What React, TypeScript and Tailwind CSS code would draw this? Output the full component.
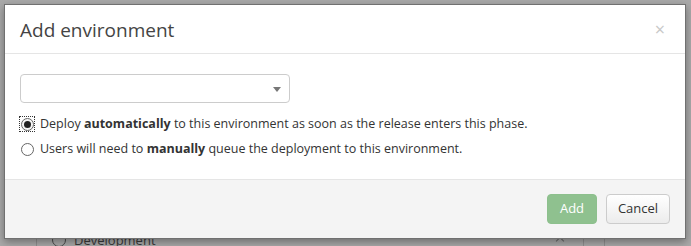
import React from "react";

export default function App() {
  const font = { fontFamily: '"Open Sans", "Noto Sans", sans-serif' };
  return (
    <div className="relative w-[691px] h-[246px] overflow-hidden bg-[#a9a9a9]" style={font}>
      {/* faint background page content */}
      <div className="absolute left-[36px] top-[236px] h-[20px] w-px bg-[#8f8f8f]" />
      <div className="absolute left-[52px] top-[232px] flex items-center gap-[8px] text-[13px] leading-[16px] text-[#3a3a3a]">
        <span className="inline-block h-[14px] w-[14px] rounded-full border border-[#4a4a4a]" />
        <span>Development</span>
      </div>
      <div className="absolute left-[557px] top-[238px] h-[6px] w-[6px] rotate-45 border-l border-t border-[#6a6a6a]" />
      <div className="absolute left-[583px] top-[236px] h-[20px] w-px bg-[#8f8f8f]" />
      <div className="absolute left-[604px] top-[236px] h-[20px] w-px bg-[#8f8f8f]" />

      {/* modal */}
      <div className="absolute left-[4px] top-[4px] flex h-[235px] w-[682px] flex-col border border-[#707070] bg-white shadow-[0_3px_8px_rgba(0,0,0,0.35)]">
        <div className="flex h-[49px] shrink-0 items-center justify-between border-b border-[#e5e5e5] pl-[15px] pr-[20px]">
          <span className="pt-[2px] text-[19px] text-[#444444]">Add environment</span>
          <span className="text-[18px] leading-none text-[#c8c8c8]">×</span>
        </div>
        <div className="flex flex-1 flex-col px-[15px] pt-[20px] text-[12.5px] text-[#333333]">
          <div className="relative h-[29px] w-[270px] rounded-[4px] border border-[#cccccc] bg-white">
            <span className="absolute right-[8px] top-[12px] h-0 w-0 border-x-[4px] border-t-[5px] border-x-transparent border-t-[#777777]" />
          </div>
          <div className="mt-[12px] flex items-center gap-[6px]">
            <span className="flex h-[14px] w-[14px] items-center justify-center outline outline-1 outline-dotted outline-[#333]">
              <span className="flex h-[13px] w-[13px] items-center justify-center rounded-full border border-[#666] bg-[#f6f6f6]">
                <span className="h-[7px] w-[7px] rounded-full bg-[#222]" />
              </span>
            </span>
            <span>
              Deploy <b className="font-bold">automatically</b> to this environment as soon as the release enters this phase.
            </span>
          </div>
          <div className="mt-[6px] flex items-center gap-[6px]">
            <span className="flex h-[14px] w-[14px] items-center justify-center">
              <span className="h-[13px] w-[13px] rounded-full border border-[#666] bg-white" />
            </span>
            <span>
              Users will need to <b className="font-bold">manually</b> queue the deployment to this environment.
            </span>
          </div>
        </div>
        <div className="flex h-[59px] shrink-0 items-center justify-end gap-[9px] border-t border-[#e5e5e5] bg-[#f4f4f4] pr-[15px]">
          <button className="h-[30px] w-[50px] rounded-[4px] border border-[#8dc08d] bg-[#8fc18f] text-[13px] text-white">
            Add
          </button>
          <button className="h-[30px] w-[64px] rounded-[4px] border border-[#cccccc] bg-gradient-to-b from-white to-[#ececec] text-[13px] text-[#333333]">
            Cancel
          </button>
        </div>
      </div>
    </div>
  );
}
